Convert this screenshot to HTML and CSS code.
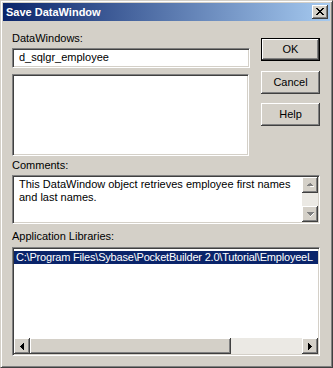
FILE: index.html
```html
<!DOCTYPE html>
<html>
<head>
<meta charset="utf-8">
<link rel="stylesheet" href="styles.css">
</head>
<body>
<div class="window">
  <div class="titlebar">
    <span class="title">Save DataWindow</span>
    <div class="closebtn raised">
      <svg width="8" height="7" viewBox="0 0 8 7"><path d="M0 0h2v1h1v1h2v-1h1v-1h2v1h-1v1h-1v1h-1v1h1v1h1v1h1v1h-2v-1h-1v-1h-2v1h-1v1h-2v-1h1v-1h1v-1h1v-1h-1v-1h-1v-1h-1z" fill="#000"/></svg>
    </div>
  </div>
  <div class="content">
    <div class="top">
      <div class="leftcol">
        <div class="label">DataWindows:</div>
        <div class="input sunken">d_sqlgr_employee</div>
        <div class="listbox sunken"></div>
      </div>
      <div class="rightcol">
        <div class="btn default"><div class="btn-inner raised">OK</div></div>
        <div class="btn raised gap1">Cancel</div>
        <div class="btn raised gap2">Help</div>
      </div>
    </div>
    <div class="label comments-label">Comments:</div>
    <div class="comments sunken">
      <div class="comments-text">This DataWindow object retrieves employee first names and last names.</div>
      <div class="vscroll">
        <div class="sbtn raised">
          <svg width="7" height="4" viewBox="0 0 7 4"><path d="M4 1h1v1h1v1h1v1h-4z" fill="#fff"/><path d="M3 0h1v1h1v1h1v1h-6v-1h1v-1h1z" fill="#808080"/></svg>
        </div>
        <div class="track"></div>
        <div class="sbtn raised">
          <svg width="7" height="5" viewBox="0 0 7 5"><path d="M6 1h1v1h-1v1h-1v1h-1v1h-1v-1h1v-1h1v-1h1z" fill="#fff"/><path d="M0 0h7v1h-1v1h-1v1h-1v1h-1v-1h-1v-1h-1v-1h-1z" fill="#808080"/></svg>
        </div>
      </div>
    </div>
    <div class="label libs-label">Application Libraries:</div>
    <div class="libs sunken">
      <div class="rows">
        <div class="row selected">C:\Program Files\Sybase\PocketBuilder 2.0\Tutorial\EmployeeL</div>
      </div>
      <div class="hscroll">
        <div class="sbtn raised">
          <svg width="4" height="7" viewBox="0 0 4 7"><path d="M3 0h1v7h-1v-1h-1v-1h-1v-1h-1v-1h1v-1h1v-1h1z" fill="#000"/></svg>
        </div>
        <div class="thumb raised"></div>
        <div class="htrack"></div>
        <div class="sbtn raised">
          <svg width="4" height="7" viewBox="0 0 4 7"><path d="M0 0h1v1h1v1h1v1h1v1h-1v1h-1v1h-1v1h-1z" fill="#000"/></svg>
        </div>
      </div>
    </div>
  </div>
</div>
</body>
</html>
```

FILE: styles.css
```css
* { box-sizing: border-box; }
html, body { margin: 0; padding: 0; background: #d4d0c8; }
body {
  font-family: "Liberation Sans", Arial, sans-serif;
  font-size: 11px;
  line-height: 13px;
  color: #000;
}
.window {
  width: 333px;
  height: 368px;
  background: #d4d0c8;
  border: 1px solid;
  border-color: #d4d0c8 #404040 #404040 #d4d0c8;
  box-shadow: inset 1px 1px #fff, inset -1px -1px #808080;
  padding: 2px;
}
.titlebar {
  height: 18px;
  background: linear-gradient(to right, #0a246a, #a6caf0);
  display: flex;
  align-items: center;
  padding: 0 2px 0 3px;
}
.title {
  flex: 1;
  color: #fff;
  font-weight: bold;
  font-size: 11px;
  line-height: 13px;
  padding-top: 1px;
}
.raised {
  background: #d4d0c8;
  box-shadow: inset -1px -1px #404040, inset 1px 1px #fff, inset -2px -2px #808080;
}
.sunken {
  background: #fff;
  border: 1px solid;
  border-color: #808080 #fff #fff #808080;
  box-shadow: inset 1px 1px #404040, inset -1px -1px #d4d0c8;
}
.closebtn {
  width: 16px;
  height: 14px;
  display: flex;
  align-items: center;
  justify-content: center;
  padding: 0 1px 1px 0;
}
.closebtn svg { display: block; }
.content {
  padding: 0 10px 0 9px;
}
.top {
  display: flex;
}
.leftcol {
  width: 238px;
  padding-top: 11px;
}
.label {
  height: 13px;
  white-space: nowrap;
}
.input {
  margin-top: 3px;
  height: 20px;
  width: 238px;
  padding: 2px 4px 0 6px;
  white-space: nowrap;
}
.listbox {
  margin-top: 6px;
  height: 82px;
  width: 237px;
}
.rightcol {
  margin-left: 11px;
  padding-top: 17px;
  width: 59px;
  display: flex;
  flex-direction: column;
}
.btn {
  height: 23px;
  width: 59px;
  display: flex;
  align-items: center;
  justify-content: center;
  padding-bottom: 1px;
}
.btn.default {
  border: 1px solid #000;
  padding: 0;
}
.btn-inner {
  width: 100%;
  height: 100%;
  display: flex;
  align-items: center;
  justify-content: center;
  padding-bottom: 1px;
}
.gap1 { margin-top: 10px; }
.gap2 { margin-top: 9px; }
.comments-label { margin-top: 3px; }
.comments {
  margin-top: 3px;
  height: 49px;
  width: 308px;
  display: flex;
  padding: 1px;
}
.comments-text {
  flex: 1;
  padding: 1px 4px 0 5px;
}
.vscroll {
  width: 16px;
  display: flex;
  flex-direction: column;
}
.sbtn {
  width: 16px;
  height: 16px;
  display: flex;
  align-items: center;
  justify-content: center;
  flex: none;
}
.sbtn svg { display: block; }
.track, .htrack {
  flex: 1;
  background: #ebe9e4;
}
.libs-label { margin-top: 6px; }
.libs {
  margin-top: 4px;
  height: 109px;
  width: 308px;
  padding: 1px;
  display: flex;
  flex-direction: column;
}
.rows {
  flex: 1;
  overflow: hidden;
  padding-top: 2px;
}
.row {
  height: 13px;
  white-space: nowrap;
  overflow: hidden;
  padding-left: 2px;
  letter-spacing: -0.2px;
}
.selected {
  background: #0a246a;
  color: #fff;
}
.hscroll {
  height: 16px;
  display: flex;
}
.thumb {
  width: 201px;
  height: 16px;
}
```
